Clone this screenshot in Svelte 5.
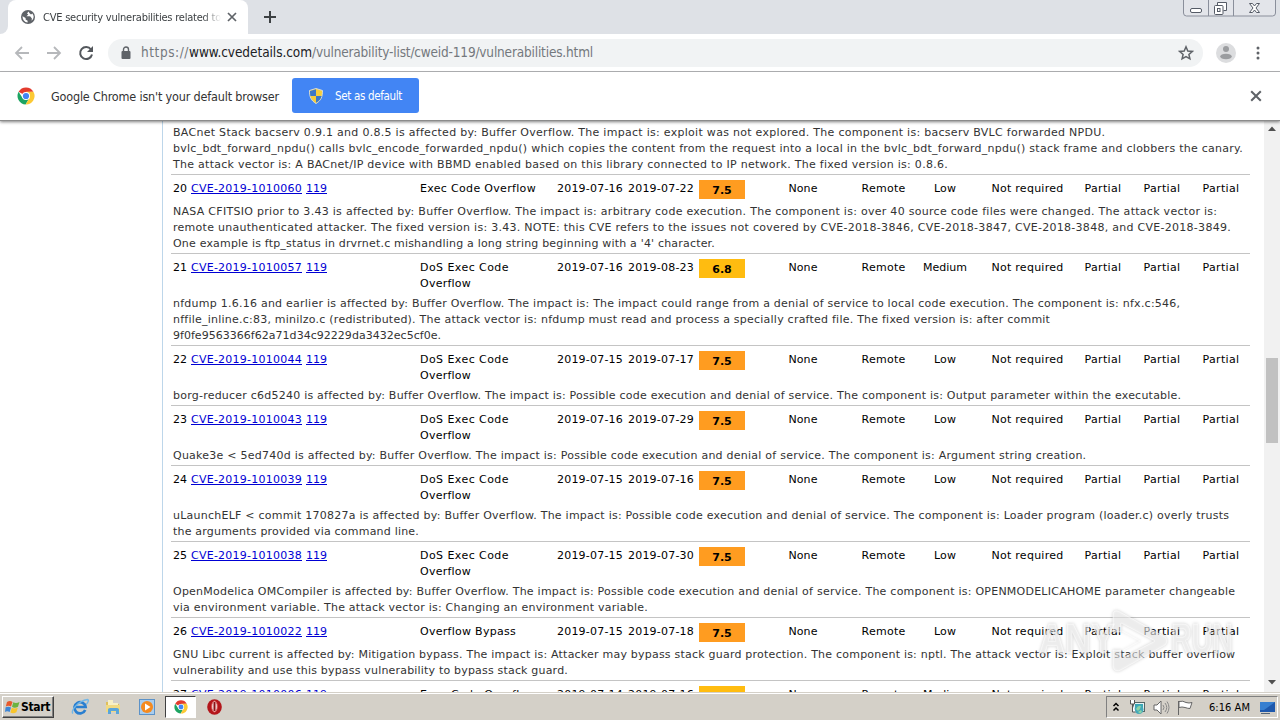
<script>
  const intro = [
    ["BACnet Stack bacserv 0.9.1 and 0.8.5 is affected by: Buffer Overflow. The impact is: exploit was not explored. The component is: bacserv BVLC forwarded NPDU.", 932],
    ["bvlc_bdt_forward_npdu() calls bvlc_encode_forwarded_npdu() which copies the content from the request into a local in the bvlc_bdt_forward_npdu() stack frame and clobbers the canary.", 1070],
    ["The attack vector is: A BACnet/IP device with BBMD enabled based on this library connected to IP network. The fixed version is: 0.8.6.", 775]
  ];

  const EXEC = [["Exec Code Overflow", 116]];
  const DOS = [["DoS Exec Code", 89], ["Overflow", 51]];
  const BYPASS = [["Overflow Bypass", 96]];

  const rows = [
    {
      num: 20, cve: "CVE-2019-1010060", type: EXEC, published: "2019-07-16", updated: "2019-07-22", score: "7.5", complexity: "Low",
      lines: [
        ["NASA CFITSIO prior to 3.43 is affected by: Buffer Overflow. The impact is: arbitrary code execution. The component is: over 40 source code files were changed. The attack vector is:", 1044],
        ["remote unauthenticated attacker. The fixed version is: 3.43. NOTE: this CVE refers to the issues not covered by CVE-2018-3846, CVE-2018-3847, CVE-2018-3848, and CVE-2018-3849.", 1058],
        ["One example is ftp_status in drvrnet.c mishandling a long string beginning with a '4' character.", 542]
      ]
    },
    {
      num: 21, cve: "CVE-2019-1010057", type: DOS, published: "2019-07-16", updated: "2019-08-23", score: "6.8", complexity: "Medium",
      lines: [
        ["nfdump 1.6.16 and earlier is affected by: Buffer Overflow. The impact is: The impact could range from a denial of service to local code execution. The component is: nfx.c:546,", 1007],
        ["nffile_inline.c:83, minilzo.c (redistributed). The attack vector is: nfdump must read and process a specially crafted file. The fixed version is: after commit", 877],
        ["9f0fe9563366f62a71d34c92229da3432ec5cf0e.", 268]
      ]
    },
    {
      num: 22, cve: "CVE-2019-1010044", type: DOS, published: "2019-07-15", updated: "2019-07-17", score: "7.5", complexity: "Low",
      lines: [["borg-reducer c6d5240 is affected by: Buffer Overflow. The impact is: Possible code execution and denial of service. The component is: Output parameter within the executable.", 1008]]
    },
    {
      num: 23, cve: "CVE-2019-1010043", type: DOS, published: "2019-07-16", updated: "2019-07-29", score: "7.5", complexity: "Low",
      lines: [["Quake3e < 5ed740d is affected by: Buffer Overflow. The impact is: Possible code execution and denial of service. The component is: Argument string creation.", 913]]
    },
    {
      num: 24, cve: "CVE-2019-1010039", type: DOS, published: "2019-07-15", updated: "2019-07-16", score: "7.5", complexity: "Low",
      lines: [
        ["uLaunchELF < commit 170827a is affected by: Buffer Overflow. The impact is: Possible code execution and denial of service. The component is: Loader program (loader.c) overly trusts", 1056],
        ["the arguments provided via command line.", 246]
      ]
    },
    {
      num: 25, cve: "CVE-2019-1010038", type: DOS, published: "2019-07-15", updated: "2019-07-30", score: "7.5", complexity: "Low",
      lines: [
        ["OpenModelica OMCompiler is affected by: Buffer Overflow. The impact is: Possible code execution and denial of service. The component is: OPENMODELICAHOME parameter changeable", 1062],
        ["via environment variable. The attack vector is: Changing an environment variable.", 475]
      ]
    },
    {
      num: 26, cve: "CVE-2019-1010022", type: BYPASS, published: "2019-07-15", updated: "2019-07-18", score: "7.5", complexity: "Low",
      lines: [
        ["GNU Libc current is affected by: Mitigation bypass. The impact is: Attacker may bypass stack guard protection. The component is: nptl. The attack vector is: Exploit stack buffer overflow", 1062],
        ["vulnerability and use this bypass vulnerability to bypass stack guard.", 395]
      ]
    },
    { num: 27, cve: "CVE-2019-1010006", type: EXEC, published: "2019-07-14", updated: "2019-07-16", score: "6.8", complexity: "Medium", lines: [] }
  ];

  // spread the letters so that the text takes exactly `width` pixels
  function fit(node, width) {
    const natural = node.getBoundingClientRect().width;
    const spacing = (width - natural) / node.textContent.length;
    node.style.letterSpacing = spacing + "px";
  }
</script>

{#snippet chromeLogo(size)}
  <svg width={size} height={size} viewBox="0 0 18 18">
    <circle cx="9" cy="9" r="8.5" fill="#fff" />
    <path d="M9 9 1.6 4.8A8.5 8.5 0 0 1 16.4 4.8L9 5z" fill="#e33b2e" />
    <path d="M1.6 4.8A8.5 8.5 0 0 0 8.6 17.5L12.4 11 5.5 11z" fill="#1da462" />
    <path d="M16.4 4.8A8.5 8.5 0 0 1 8.6 17.5L12.5 11 9 4.8z" fill="#fcc934" />
    <circle cx="9" cy="9" r="4" fill="#fff" />
    <circle cx="9" cy="9" r="3.1" fill="#4285f4" />
  </svg>
{/snippet}

{#snippet cross(size, color)}
  <svg width={size} height={size} viewBox="0 0 10 10"><path d="M1 1 9 9M9 1 1 9" stroke={color} stroke-width="1.7" /></svg>
{/snippet}

<div class="screen">
  <header class="tabs">
    <div class="edge"></div>
    <div class="tab">
      <svg width="14" height="14" viewBox="0 0 14 14">
        <circle cx="7" cy="7" r="7" fill="#5f6368" />
        <path d="M1.6 6.3 4.6 8v1.5l2 1.2v1.8A5.6 5.6 0 0 1 1.6 6.3zM7.5 1.5 6 3.4 7.3 4.6 5.4 6.3h3.7l1.8 2.2-.3 2.3a5.6 5.6 0 0 0 .8-7.4L10 4.6 8.6 3.3z" fill="#fff" />
      </svg>
      <div class="title"><span use:fit={178}>CVE security vulnerabilities related to</span></div>
      {@render cross(10, "#5f6368")}
    </div>
    <svg class="plus" width="14" height="14" viewBox="0 0 14 14"><path d="M7 1v12M1 7h12" stroke="#3c4043" stroke-width="2" /></svg>
    <svg class="controls" width="93" height="18" viewBox="0 0 93 18">
      <path d="M.5 0v13a3 3 0 0 0 3 3h86a3 3 0 0 0 3-3V0M25.5 0v16M50.5 0v16" fill="#e3e5ea" stroke="#8a8f9b" />
      <rect x="7.5" y="8.5" width="11" height="4" rx="1.5" fill="#fff" stroke="#555b66" />
      <path d="M34.5 5.5V2.5h9v8h-3" fill="#fff" stroke="#555b66" />
      <rect x="31.5" y="5.5" width="8.5" height="9" rx="1" fill="#fff" stroke="#555b66" />
      <rect x="34.5" y="8.5" width="2.5" height="3" fill="none" stroke="#555b66" />
      <path d="M66.5 3.5h3l2 2.5 2-2.500h3l-3.500 4.500 3.500 4.500h-3l-2-2.500-2 2.500h-3l3.500-4.500z" fill="#fff" stroke="#555b66" />
    </svg>
  </header>

  <div class="toolbar">
    <svg class="nav" width="16" height="16" viewBox="0 0 16 16"><path d="M15 8H2M8 2 2 8l6 6" fill="none" stroke="#b6b8bb" stroke-width="1.8" /></svg>
    <svg class="nav" width="16" height="16" viewBox="0 0 16 16"><path d="M1 8h13M8 2l6 6-6 6" fill="none" stroke="#b6b8bb" stroke-width="1.8" /></svg>
    <svg class="nav" width="16" height="16" viewBox="0 0 16 16">
      <path d="M13 4.5A6 6 0 1 0 14 9.5" fill="none" stroke="#54585d" stroke-width="2" />
      <path d="M15 1v6H9z" fill="#54585d" />
    </svg>
    <div class="address">
      <svg width="10" height="14" viewBox="0 0 10 14">
        <path d="M2.5 6V3.5a2.5 2.5 0 0 1 5 0V6" fill="none" stroke="#5f6368" stroke-width="1.4" />
        <rect x=".5" y="5" width="9" height="8" rx="1" fill="#5f6368" />
      </svg>
      <div class="url">
        <span use:fit={48}>https://</span><span class="host" use:fit={123}>www.cvedetails.com</span><span use:fit={281}>/vulnerability-list/cweid-119/vulnerabilities.html</span>
      </div>
      <svg width="16" height="16" viewBox="0 0 16 16"><path d="M8 1.8 9.8 6l4.500.4-3.400 3 1 4.400L8 11.500l-3.900 2.300 1-4.400-3.400-3L6.200 6z" fill="none" stroke="#5f6368" stroke-width="1.5" /></svg>
    </div>
    <svg class="avatar" width="20" height="20" viewBox="0 0 20 20">
      <circle cx="10" cy="10" r="10" fill="#dcdddf" />
      <circle cx="10" cy="6" r="3" fill="#9b9da0" />
      <ellipse cx="10" cy="13.5" rx="5.8" ry="2.8" fill="#9b9da0" />
    </svg>
    <svg class="dots" width="4" height="14" viewBox="0 0 4 14"><g fill="#5f6368"><circle cx="2" cy="2" r="1.5" /><circle cx="2" cy="7" r="1.5" /><circle cx="2" cy="12" r="1.5" /></g></svg>
  </div>

  <div class="infobar">
    {@render chromeLogo(18)}
    <div class="message"><span use:fit={228}>Google Chrome isn't your default browser</span></div>
    <button>
      <svg width="14" height="16" viewBox="0 0 14 16">
        <path d="M7 .5 13.5 2.5C13.5 9 12 12.5 7 15.5 2 12.5.5 9 .5 2.5z" fill="#f6ce3c" stroke="#d8dcd4" />
        <path d="M7 1.2V8H1.4Q1 6 1 3zM7 8h5.600Q11.500 12.500 7 14.800z" fill="#3c78c8" />
      </svg>
      <span use:fit={67}>Set as default</span>
    </button>
    <div class="close">{@render cross(12, "#5f6368")}</div>
  </div>

  <main>
    <div class="margin"></div>
    <div class="list">
      <div class="details first">
        {#each intro as [text, width]}
          <div><span use:fit={width}>{text}</span></div>
        {/each}
      </div>
      {#each rows as row (row.num)}
        <section>
          <div class="row">
            <div>{row.num}</div>
            <div><a href="#cve" use:fit={111}>{row.cve}</a></div>
            <div><a href="#cwe" use:fit={21}>119</a></div>
            <div>
              {#each row.type as [text, width]}
                <div><span use:fit={width}>{text}</span></div>
              {/each}
            </div>
            <div><span use:fit={66}>{row.published}</span></div>
            <div><span use:fit={66}>{row.updated}</span></div>
            <div class="score" class:medium={row.score === "6.8"}>{row.score}</div>
            <div class="center none"><span use:fit={29}>None</span></div>
            <div class="center"><span use:fit={44}>Remote</span></div>
            <div class="center"><span use:fit={row.complexity === "Low" ? 22 : 44}>{row.complexity}</span></div>
            <div class="center"><span use:fit={72}>Not required</span></div>
            <div class="center"><span use:fit={37}>Partial</span></div>
            <div class="center"><span use:fit={37}>Partial</span></div>
            <div class="center"><span use:fit={37}>Partial</span></div>
          </div>
          <div class="details">
            {#each row.lines as [text, width]}
              <div><span use:fit={width}>{text}</span></div>
            {/each}
          </div>
        </section>
      {/each}
    </div>
    <div class="scrollbar">
      <svg width="8" height="5" viewBox="0 0 8 5"><path d="M0 5 4 .5 8 5z" fill="#505050" /></svg>
      <div class="thumb"></div>
      <svg width="8" height="5" viewBox="0 0 8 5"><path d="M0 0h8L4 4.5z" fill="#505050" /></svg>
    </div>
    <svg class="watermark" width="210" height="72" viewBox="0 0 210 72">
      <g fill="#fff" fill-opacity=".55" stroke="#fff" stroke-opacity=".5">
        <text x="3" y="46" textLength="76" lengthAdjust="spacingAndGlyphs">ANY</text>
        <text x="135" y="46" textLength="62" lengthAdjust="spacingAndGlyphs">RUN</text>
        <path d="M77 6Q79 2 84 5L129 30Q133 34 129 38L85 63Q79 66 77 60V43h8v9l34-18L85 16v9h-8z" />
        <path d="M86 24 104 34 86 44" fill="none" />
      </g>
    </svg>
  </main>

  <footer>
    <div class="start">
      <svg width="15" height="14" viewBox="0 0 15 14">
        <path d="M2 2Q5 0 7.5 2L6 6.5Q3.5 5 .8 6.5z" fill="#e8592b" />
        <path d="M8.3 2.3Q11 4 14.5 2L13 6.8Q9.5 8.5 7 6.8z" fill="#6cb33f" />
        <path d="M.6 7.3Q3.5 6 6 7.5L4.7 12Q2 10.5 0 12z" fill="#3d86d6" />
        <path d="M6.8 7.7Q9.5 9.3 12.8 7.7L11.4 12.3Q8 14 5.4 12.4z" fill="#f8c52c" />
      </svg>
      <span use:fit={29}>Start</span>
    </div>
    <svg class="ie" width="18" height="18" viewBox="0 0 18 18">
      <path d="M14.2 12A5.600 5.600 0 1 1 14.600 9H5" fill="none" stroke="#2a7fd0" stroke-width="2.7" />
      <path d="M2 15.500C-1 13 7 3 16.500 1.500 18.500 2 16.500 5 15.500 6" fill="none" stroke="#72b7e8" stroke-width="1.4" />
    </svg>
    <svg class="folder" width="16" height="16" viewBox="0 0 16 16">
      <path d="M1 3h5l1.500 2H14v8H1z" fill="#dfbf5c" />
      <path d="M3 1h5v3h5v3H3z" fill="#f8f0c5" />
      <path d="M1 6h14v7H1z" fill="#f1da82" />
      <path d="M3 15V10.500q0-1.500 2-1.500h7q2 0 2 1.500V15h-3v-3H6v3z" fill="#5aa5da" />
    </svg>
    <svg class="media" width="16" height="16" viewBox="0 0 16 16">
      <rect x=".5" y=".5" width="15" height="15" fill="#a9cdee" stroke="#5c92c8" />
      <circle cx="8" cy="8" r="6" fill="#f58a1f" />
      <path d="M6 4.500 11.500 8 6 11.500z" fill="#fff" />
    </svg>
    <div class="running">{@render chromeLogo(14)}</div>
    <svg class="opera" width="15" height="16" viewBox="0 0 15 16">
      <ellipse cx="7.5" cy="8" rx="7.300" ry="7.800" fill="#b3161b" />
      <ellipse cx="7.5" cy="7.5" rx="2.800" ry="5.500" fill="#f5e9e9" stroke="#dc5553" />
      <path d="M7.5 3v9" stroke="#8e1015" stroke-width="2" />
    </svg>
    <div class="tray">
      <svg width="8" height="10" viewBox="0 0 8 10"><path d="M1.5 4 4 1.5 6.5 4M1.5 8.5 4 6l2.500 2.500" fill="none" stroke="#000" stroke-width="1.5" /></svg>
      <svg class="network" width="16" height="16" viewBox="0 0 16 16">
        <rect x="4.5" y="3.5" width="11" height="9" fill="#e9f2f4" stroke="#566" />
        <rect x="6" y="5" width="8" height="6" fill="#39a7b5" />
        <circle cx="10" cy="10.5" r="4.500" fill="#45a9b8" />
        <path d="M7 10q2-4 5-3l-1 3-2 2zM9 13l3-2 1 2-2 1.500z" fill="#8fd3a5" />
        <path d="M1.5 1v4h4V1M3.500 5v8h3" fill="#fff" stroke="#555" />
      </svg>
      <svg class="volume" width="17" height="15" viewBox="0 0 17 15">
        <path d="M1 5h3l4-4v13l-4-4H1z" fill="#fff" stroke="#666" />
        <path d="M10 5q2 2.500 0 5M12 3q3.500 4.500 0 9M14 1.500q4 6 0 12" fill="none" stroke="#888" />
      </svg>
      <svg class="flag" width="17" height="15" viewBox="0 0 17 15"><path d="M1.5 15V1M2 1.500q4-1 7 1 3 1 6 0l-2 6q-2 0-5-1-3-1-6 0z" fill="#fff" stroke="#666" /></svg>
      <div class="clock"><span use:fit={41}>6:16 AM</span></div>
      <svg class="desktop" width="15" height="13" viewBox="0 0 15 13">
        <rect x="0" y="1" width="15" height="10" fill="#1e58ac" />
        <path d="M0 1h15L4 9H0z" fill="#377fd0" />
        <path d="M1 12.500h9" stroke="#567" />
      </svg>
    </div>
  </footer>
</div>

<style>
  :global(body) {
    overflow: hidden;
  }

  .screen {
    width: 1280px;
    height: 720px;
    display: flex;
    flex-direction: column;
    overflow: hidden;
    background: #fff;
    font-family: "DejaVu Sans Condensed", "DejaVu Sans", sans-serif;
    font-stretch: condensed;
    white-space: nowrap;
  }

  svg {
    display: block;
    flex: none;
  }

  .tabs {
    height: 34px;
    flex: none;
    display: flex;
    background: #dee1e6;
  }

  .edge {
    width: 8px;
    background: #fff;
  }

  .edge::before {
    content: "";
    display: block;
    height: 34px;
    background: #dee1e6;
    border-bottom-right-radius: 8px;
  }

  .tab {
    width: 240px;
    box-sizing: border-box;
    display: flex;
    align-items: center;
    padding: 0 11px 0 13px;
    background: #fff;
    border-radius: 8px 8px 0 0;
  }

  .title {
    width: 178px;
    margin: 0 6px 0 8px;
    overflow: hidden;
    font-size: 11px;
    color: #3c4043;
    mask-image: linear-gradient(to right, #000 160px, transparent 178px);
  }

  .plus {
    margin: 10px auto 0 15px;
  }

  .controls {
    margin-right: 4px;
  }

  .toolbar {
    height: 37px;
    flex: none;
    display: flex;
    align-items: center;
    padding-left: 14px;
    border-bottom: 1px solid #b0b1b3;
  }

  .nav {
    margin-right: 16px;
  }

  .address {
    width: 1095px;
    height: 28px;
    box-sizing: border-box;
    display: flex;
    align-items: center;
    margin-left: -2px;
    padding: 0 9px 0 13px;
    border-radius: 14px;
    background: #f1f3f4;
  }

  .url {
    flex: 1;
    display: flex;
    margin: -2px 0 0 10px;
    font-size: 13.5px;
    color: #74787d;
  }

  .host {
    color: #202124;
  }

  .avatar {
    margin-left: 13px;
  }

  .dots {
    margin-left: 20px;
  }

  .infobar {
    height: 48px;
    flex: none;
    box-sizing: border-box;
    position: relative;
    z-index: 1;
    display: flex;
    align-items: center;
    padding-left: 17px;
    background: #fff;
    box-shadow: 0 1px 0 #8b8b8b, 0 2px 3px rgba(0, 0, 0, 0.5);
  }

  .message {
    width: 241px;
    margin-left: 16px;
    font-size: 12.5px;
    color: #333;
  }

  button {
    width: 127px;
    height: 35px;
    display: flex;
    align-items: center;
    margin-bottom: 1px;
    padding: 0 0 0 17px;
    border: 0;
    border-radius: 3px;
    background: #4285f4;
    color: #fff;
    font: inherit;
    font-size: 11.5px;
  }

  button span {
    margin-left: 12px;
  }

  .close {
    margin: 0 18px 0 auto;
  }

  main {
    height: 572px;
    flex: none;
    display: flex;
    position: relative;
    overflow: hidden;
    font-family: "DejaVu Sans", sans-serif;
    font-stretch: normal;
    font-size: 11px;
    line-height: 16px;
  }

  .margin {
    width: 162px;
    border-right: 1px solid #bdd6ea;
  }

  .list {
    width: 1079px;
    margin-left: 8px;
  }

  .details {
    padding: 0 0 1px 2px;
    color: #333;
  }

  .first {
    padding-top: 5px;
  }

  section {
    border-top: 1px solid #c4c4c4;
  }

  .row {
    display: grid;
    grid-template-columns: 18px 115px 114px 137px 71px 71px 46px 113px 51px 72px 93px 58px 60px 58px;
    min-height: 29px;
    box-sizing: border-box;
    padding: 6px 0 4px 2px;
    color: #000;
  }

  a {
    color: #0000d4;
    text-decoration: underline;
  }

  .center {
    text-align: center;
  }

  .none {
    padding-left: 3px;
  }

  .score {
    height: 19px;
    margin: -1px 0;
    background: #ff9c20;
    font-weight: bold;
    line-height: 21px;
    text-align: center;
  }

  .medium {
    background: #ffbc10;
  }

  .scrollbar {
    width: 16px;
    box-sizing: border-box;
    display: flex;
    flex-direction: column;
    align-items: center;
    justify-content: space-between;
    margin-left: auto;
    padding: 6px 0 7px;
    background: #f1f1f1;
  }

  .thumb {
    width: 12px;
    height: 85px;
    margin-top: -11px;
    background: #c1c1c1;
  }

  .watermark {
    position: absolute;
    left: 1036px;
    top: 487px;
    filter: drop-shadow(0 0 1.5px rgba(0, 0, 0, 0.3));
  }

  .watermark text {
    font: bold 42px "Liberation Sans", sans-serif;
  }

  footer {
    height: 28px;
    flex: none;
    box-sizing: border-box;
    display: flex;
    align-items: center;
    padding: 1px 2px 0;
    border-top: 1px solid #d4d0c8;
    box-shadow: inset 0 1px #fff;
    background: #d4d0c8;
  }

  .start {
    width: 52px;
    height: 22px;
    box-sizing: border-box;
    display: flex;
    align-items: center;
    padding-left: 2px;
    border: 1px solid;
    border-color: #fff #404040 #404040 #fff;
    box-shadow: inset -1px -1px #808080;
    font-size: 12px;
    font-weight: bold;
  }

  .start span {
    margin-left: 1px;
  }

  .ie {
    margin-left: 17px;
  }

  .folder {
    margin-left: 16px;
  }

  .media {
    margin-left: 18px;
  }

  .running {
    width: 31px;
    height: 22px;
    box-sizing: border-box;
    display: flex;
    align-items: center;
    justify-content: center;
    margin-left: 10px;
    border: 1px solid;
    border-color: #404040 #fff #fff #404040;
    background: #fff;
  }

  .opera {
    margin-left: 11px;
  }

  .tray {
    width: 172px;
    height: 22px;
    box-sizing: border-box;
    display: flex;
    align-items: center;
    margin-left: auto;
    padding-left: 5px;
    border: 1px solid;
    border-color: #808080 #fff #fff #808080;
  }

  .network {
    margin-left: 9px;
  }

  .volume {
    margin-left: 8px;
  }

  .flag {
    margin-left: 7px;
  }

  .clock {
    width: 41px;
    margin-left: 15px;
    font-size: 11px;
  }

  .desktop {
    margin-left: 10px;
  }
</style>
